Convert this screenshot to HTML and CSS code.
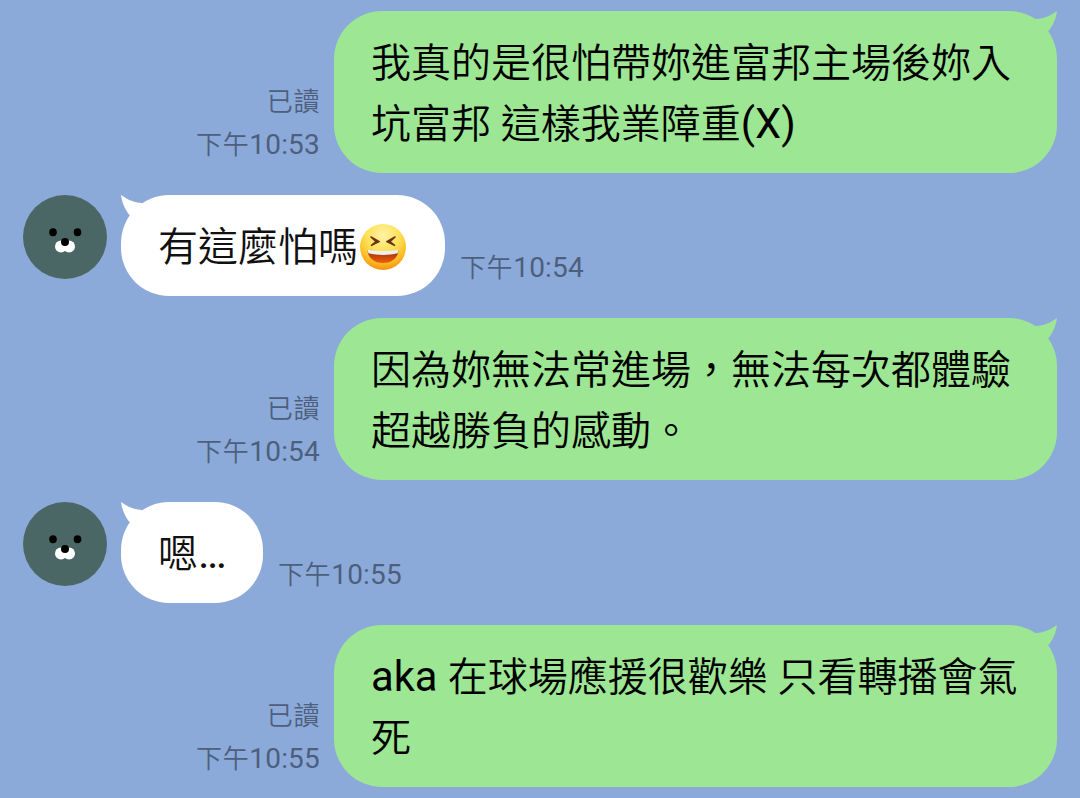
FILE: index.html
```html
<!doctype html>
<html lang="zh-Hant">
    <head>
        <meta charset="utf-8">
        <title>Chat</title>
        <link rel="stylesheet" href="styles.css">
    </head>
    <body>
        <!-- Shared drawings -->
        <svg class="defs" width="0" height="0">
            <symbol id="bear" viewBox="0 0 84 84">
                <circle cx="42" cy="42" r="42" fill="#4b6765"/>
                <ellipse cx="30" cy="37.2" rx="3.8" ry="4" fill="#000"/>
                <ellipse cx="54.5" cy="37.2" rx="3.8" ry="4" fill="#000"/>
                <ellipse cx="38" cy="51.5" rx="6" ry="6" fill="#fff"/>
                <ellipse cx="46" cy="51.5" rx="6" ry="6" fill="#fff"/>
                <circle cx="42" cy="47" r="4" fill="#000"/>
            </symbol>
            <symbol id="tail" viewBox="0 0 24 24">
                <path d="M0 0C6 4.500 13 7.500 21 8L24 18L8.500 20C4.500 15.500 1 8 0 0Z"/>
            </symbol>
        </svg>

        <div id="messages">
            <div class="row mine">
                <div class="meta"><span>已讀</span><span>下午<b>10:53</b></span></div>
                <div class="bubble">
                    <svg class="tail"><use href="#tail"/></svg>
                    <p>我真的是很怕帶妳進富邦主場後妳入<br>坑富邦 這樣我業障重<b>(X)</b></p>
                </div>
            </div>

            <div class="row">
                <svg class="avatar"><use href="#bear"/></svg>
                <div class="bubble">
                    <svg class="tail"><use href="#tail"/></svg>
                    <p>有這麼怕嗎</p>
                    <svg class="emoji" viewBox="0 0 46 46">
                        <defs>
                            <radialGradient id="face" cx=".5" cy=".25" r=".78">
                                <stop offset="0" stop-color="#fff3a8"/>
                                <stop offset=".45" stop-color="#fee158"/>
                                <stop offset=".75" stop-color="#fdbf25"/>
                                <stop offset="1" stop-color="#ef8a10"/>
                            </radialGradient>
                            <linearGradient id="mouth" x2="0" y2="1">
                                <stop offset="0" stop-color="#9c2a08"/>
                                <stop offset="1" stop-color="#ee5f0c"/>
                            </linearGradient>
                        </defs>
                        <circle cx="23" cy="23" r="23" fill="url(#face)"/>
                        <path d="M11 13L19.200 17.600L11.500 21.300L16 17.600ZM35 13L26.800 17.600L34.500 21.300L30 17.600Z" fill="#6b3510" stroke="#6b3510" stroke-width="1.600" stroke-linejoin="round"/>
                        <path d="M7.500 26C17 28 29 28 38.500 26C38 34 32 39 23 39S8 34 7.500 26Z" fill="url(#mouth)"/>
                        <path d="M7.500 25.500C17 27.500 29 27.500 38.500 25.500Q38.500 27.500 37.500 29.300C28 31.500 18 31.500 8.500 29.300Q7.500 27.500 7.500 25.500Z" fill="#eceff1"/>
                    </svg>
                </div>
                <div class="meta"><span>下午<b>10:54</b></span></div>
            </div>

            <div class="row mine">
                <div class="meta"><span>已讀</span><span>下午<b>10:54</b></span></div>
                <div class="bubble">
                    <svg class="tail"><use href="#tail"/></svg>
                    <p>因為妳無法常進場，無法每次都體驗<br>超越勝負的感動。</p>
                </div>
            </div>

            <div class="row">
                <svg class="avatar"><use href="#bear"/></svg>
                <div class="bubble short">
                    <svg class="tail"><use href="#tail"/></svg>
                    <p>嗯<b class="dots">...</b></p>
                </div>
                <div class="meta"><span>下午<b>10:55</b></span></div>
            </div>

            <div class="row mine">
                <div class="meta"><span>已讀</span><span>下午<b>10:55</b></span></div>
                <div class="bubble">
                    <svg class="tail"><use href="#tail"/></svg>
                    <p><b>aka </b>在球場應援很歡樂 只看轉播會氣<br>死</p>
                </div>
            </div>
        </div>
    </body>
</html>
```

FILE: styles.css
```css
* { margin: 0; padding: 0; box-sizing: border-box; }
b { font-weight: 400; }

body {
    height: 100vh;
    overflow: hidden;
    background: #8caad9;
    font-family: Roboto, 'Noto Sans CJK TC', sans-serif;
    font-weight: 350;
}

.defs { position: absolute; }

#messages {
    display: flex;
    flex-direction: column;
    gap: 22px;
    padding: 11px 23px;
}

.row {
    display: flex;
    align-items: flex-end;
}

.row.mine { justify-content: flex-end; }

.avatar {
    width: 84px;
    height: 84px;
    margin-right: 14px;
    align-self: flex-start;
}

.bubble {
    position: relative;
    display: flex;
    align-items: center;
    height: 101px;
    padding: 0 37px;
    border-radius: 48px;
    background: #fff;
    color: #111;
    fill: #fff;
}

.mine .bubble {
    width: 723px;
    height: 162px;
    background: #9de693;
    color: #000;
    fill: #9de693;
}

.bubble p {
    padding-top: 4px;
    font-size: 40px;
    line-height: 61px;
    white-space: nowrap;
}

.bubble p b {
    font-size: 41.7px;
    line-height: 1;
}

.bubble p .dots {
    font-size: 44px;
    letter-spacing: -2.7px;
}

.bubble.short { width: 142px; }

.tail {
    position: absolute;
    top: 0;
    left: 0;
    width: 24px;
    height: 24px;
}

.mine .tail {
    left: auto;
    right: 0;
    transform: scaleX(-1);
}

.emoji {
    width: 46px;
    height: 46px;
    margin: 2px 2px 0;
}

.meta {
    display: flex;
    flex-direction: column;
    margin-left: 15px;
    padding-bottom: 6px;
    font-size: 26px;
    line-height: 43px;
    letter-spacing: .6px;
    color: #4d5f7d;
    white-space: nowrap;
}

.meta b {
    font-size: 28px;
    letter-spacing: .2px;
}

.mine .meta {
    margin: 0 14px 0 0;
    text-align: right;
}

.mine .meta span:first-child { line-height: 42px; }
```
